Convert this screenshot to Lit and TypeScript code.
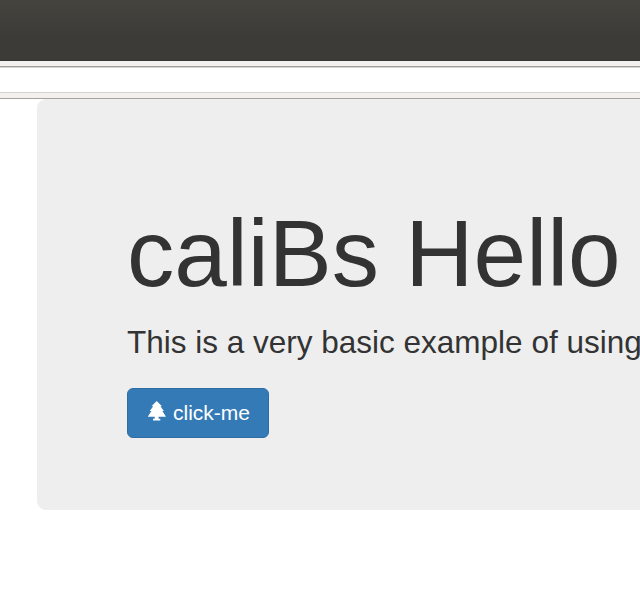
import { LitElement, html, css } from "lit";
import { customElement } from "lit/decorators.js";

@customElement("app-root")
export class AppRoot extends LitElement {
  static styles = css`
    :host {
      display: block;
      width: 100%;
      height: 593px;
      overflow: hidden;
      background: #fff;
      color: #333;
      font-family: "Liberation Sans", Arial, sans-serif;
    }
    * { box-sizing: border-box; }
    .titlebar {
      height: 61px;
      background: linear-gradient(#45443f, #3c3b37 60%);
      border-bottom: 1px solid #383733;
    }
    .edge {
      height: 7px;
      background: #f2f1f0;
      border-bottom: 1px solid #d6d5d4;
      box-shadow: inset 0 -1px #9f9d9b;
    }
    .field {
      height: 25px;
      background: #fff;
      border-bottom: 1px solid #d3d2d1;
    }
    .lower {
      height: 6px;
      background: #f2f1f0;
      border-bottom: 1px solid #a5a3a1;
    }
    .jumbotron {
      width: 1755px;
      height: 411px;
      margin-left: 37px;
      padding: 107px 90px 72px;
      border-radius: 9px;
      background: #eee;
      white-space: nowrap;
    }
    h1 {
      margin: 0 0 19px;
      font-size: 94.5px;
      font-weight: 400;
      line-height: 95px;
    }
    p {
      margin: 0 0 24px;
      font-size: 31.5px;
      line-height: 44px;
    }
    button {
      display: flex;
      align-items: center;
      gap: 6px;
      width: 142px;
      height: 50px;
      padding: 0 18px 0 19px;
      border: 1px solid #2e6da4;
      border-radius: 6px;
      background: #337ab7;
      color: #fff;
      font: 21px/30px "Liberation Sans", Arial, sans-serif;
    }
    svg {
      flex: none;
      width: 20px;
      height: 22px;
      margin-top: -4px;
    }
  `;

  render() {
    return html`
      <header>
        <div class="titlebar"></div>
        <div class="edge"></div>
        <div class="field"></div>
        <div class="lower"></div>
      </header>
      <main class="jumbotron">
        <h1>caliBs Hello</h1>
        <p>This is a very basic example of using</p>
        <button>
          <svg viewBox="0 0 20 22" fill="#fff" aria-hidden="true">
            <path d="M9.7 1 15 6.2h-1.6l3.5 4.9h-1.5l3.6 5.6h-7.4v2.1h1.7v1.7H6v-1.7h1.7v-2.1H.8l3.6-5.6H2.7l3.6-4.9H4.5z" />
          </svg>
          <span>click-me</span>
        </button>
      </main>
    `;
  }
}
